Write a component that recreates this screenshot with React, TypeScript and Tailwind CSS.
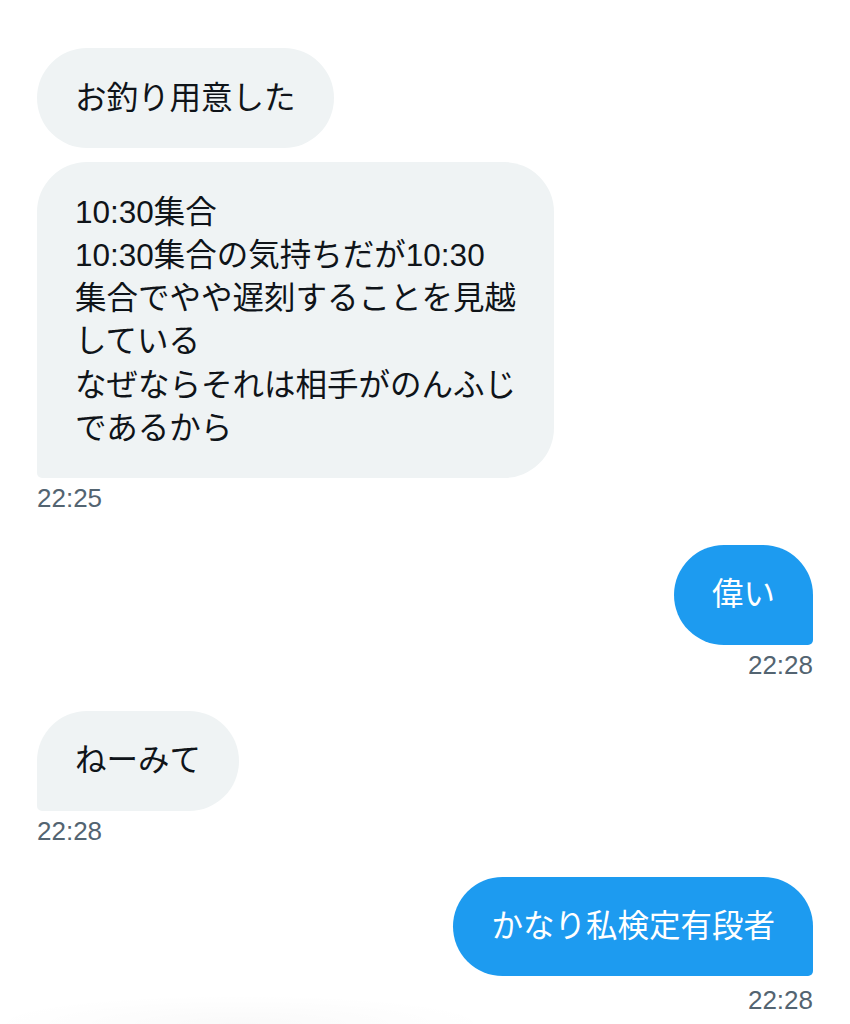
import React from "react";

const FONT = { fontFamily: '"Liberation Sans", "Noto Sans CJK JP", sans-serif' };

function Received({ children, last }: { children: React.ReactNode; last?: boolean }) {
  return (
    <div className="flex justify-start">
      <div
        className={`bg-[#eff3f4] text-[#0f1419] text-[31.5px] leading-[43.2px] px-[38px] py-[28.5px] whitespace-nowrap rounded-[50px] ${
          last ? "rounded-bl-[5px]" : ""
        }`}
      >
        {children}
      </div>
    </div>
  );
}

function Sent({ children }: { children: React.ReactNode }) {
  return (
    <div className="flex justify-end">
      <div className="bg-[#1d9bf0] text-white text-[31.5px] leading-[43.2px] px-[38px] py-[28px] whitespace-nowrap rounded-[50px] rounded-br-[5px]">
        {children}
      </div>
    </div>
  );
}

function Time({ children, right }: { children: React.ReactNode; right?: boolean }) {
  return (
    <div
      className={`mt-[5px] text-[26px] leading-[30px] text-[#536471] ${right ? "text-right" : "text-left"}`}
    >
      {children}
    </div>
  );
}

export default function App() {
  return (
    <div
      className="relative w-[850px] h-[1024px] overflow-hidden bg-white px-[37px] pt-[48px]"
      style={FONT}
    >
      <div className="absolute left-0 bottom-0 w-[480px] h-[28px] bg-[radial-gradient(ellipse_at_bottom,rgba(0,0,0,0.025),rgba(0,0,0,0)_75%)]" />
      <div className="relative flex flex-col">
        {/* group 1 */}
        <div className="flex flex-col gap-[14px]">
          <Received>お釣り用意した</Received>
          <Received last>
            10:30集合
            <br />
            10:30集合の気持ちだが10:30
            <br />
            集合でやや遅刻することを見越
            <br />
            している
            <br />
            なぜならそれは相手がのんふじ
            <br />
            であるから
          </Received>
        </div>
        <Time>22:25</Time>

        {/* group 2 */}
        <div className="mt-[32px]">
          <Sent>偉い</Sent>
          <Time right>22:28</Time>
        </div>

        {/* group 3 */}
        <div className="mt-[31px]">
          <Received last>ねーみて</Received>
          <Time>22:28</Time>
        </div>

        {/* group 4 */}
        <div className="mt-[31px]">
          <Sent>かなり私検定有段者</Sent>
          <div className="mt-[9px] text-[26px] leading-[30px] text-[#536471] text-right">22:28</div>
        </div>
      </div>
    </div>
  );
}
